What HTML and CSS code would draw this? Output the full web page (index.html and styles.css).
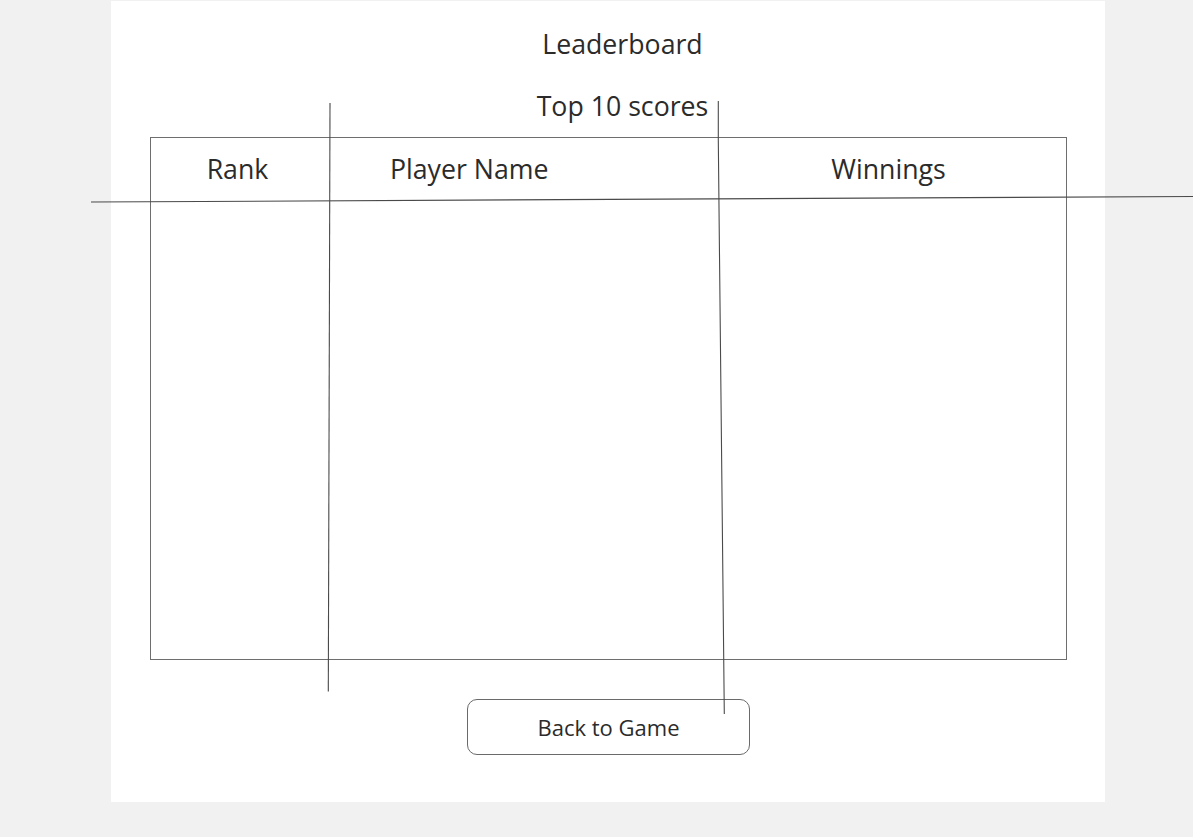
FILE: index.html
```html
<!DOCTYPE html>
<html lang="en">
<head>
<meta charset="utf-8">
<title>Leaderboard</title>
<link rel="stylesheet" href="styles.css">
</head>
<body>
<main class="panel">
  <h1 class="title">Leaderboard</h1>
  <h2 class="subtitle">Top 10 scores</h2>
  <section class="board">
    <div class="board-head">
      <div class="col col-rank">Rank</div>
      <div class="col col-name">Player Name</div>
      <div class="col col-win">Winnings</div>
    </div>
    <div class="board-body"></div>
  </section>
  <div class="actions">
    <button class="back-btn" type="button">Back to Game</button>
  </div>
</main>
<svg class="sketch" width="1193" height="837" viewBox="0 0 1193 837" aria-hidden="true">
  <line x1="91" y1="202" x2="1193" y2="196.5" class="sk"/>
  <line x1="330" y1="103" x2="328.3" y2="691.5" class="sk"/>
  <polyline points="718.3,101 718.3,140 724.3,714" class="sk"/>
</svg>
</body>
</html>
```
FILE: styles.css
```css
html, body {
  margin: 0;
  padding: 0;
}
body {
  background: #f1f1f1;
  font-family: "Open Sans", "DejaVu Sans", sans-serif;
  color: #2b2b2b;
  width: 1193px;
  height: 837px;
  position: relative;
  overflow: hidden;
}
.panel {
  margin: 1px 0 0 111px;
  width: 994px;
  height: 801px;
  background: #ffffff;
  box-sizing: border-box;
  padding: 25px 38px 0 39px;
  display: flex;
  flex-direction: column;
}
.title,
.subtitle {
  margin: 0;
  font-weight: 400;
  font-size: 26.7px;
  line-height: 36px;
  text-align: center;
  padding-left: 28px;
}
.subtitle {
  margin-top: 26px;
}
.board {
  margin-top: 13px;
  height: 523px;
  border: 1px solid #6e6e6e;
  box-sizing: border-box;
  display: flex;
  flex-direction: column;
}
.board-head {
  display: grid;
  grid-template-columns: 173px 1fr 355px;
  padding-top: 13px;
  font-size: 26.7px;
  line-height: 36px;
}
.col-rank,
.col-win {
  text-align: center;
}
.col-name {
  padding-left: 66px;
}
.board-body {
  flex: 1;
}
.actions {
  display: flex;
  justify-content: center;
  margin-top: 39px;
}
.back-btn {
  width: 283px;
  height: 56px;
  box-sizing: border-box;
  border: 1px solid #6a6a6a;
  border-radius: 10px;
  background: #ffffff;
  font-family: "Open Sans", "DejaVu Sans", sans-serif;
  font-size: 22px;
  color: #2b2b2b;
  padding: 0;
}
.sketch {
  position: absolute;
  left: 0;
  top: 0;
  pointer-events: none;
}
.sk {
  stroke: #4a4a4a;
  stroke-width: 1.1;
  fill: none;
}
```
